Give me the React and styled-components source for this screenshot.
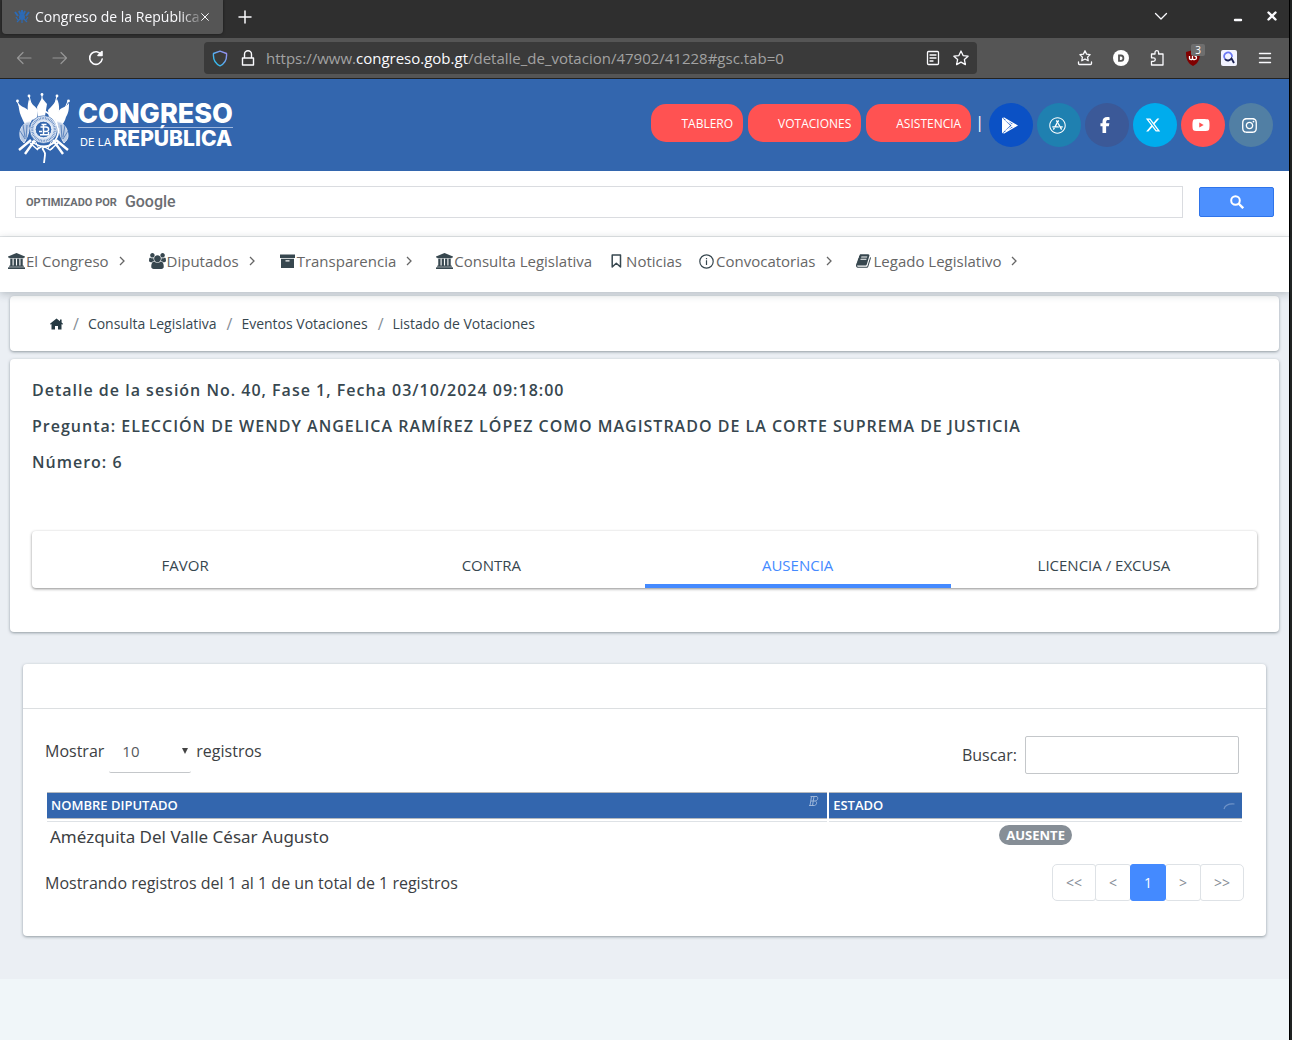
import React from "react";
import styled, { createGlobalStyle, css } from "styled-components";
import { FaAppStore, FaFacebookF, FaXTwitter, FaYoutube, FaInstagram } from "react-icons/fa6";

const sans = `"Open Sans", "Noto Sans", sans-serif`;
const bodySans = `"Noto Sans", "Open Sans", sans-serif`;

const GlobalStyle = createGlobalStyle`
  *, *::before, *::after { box-sizing: border-box; }
  html { height: 100%; }
  body {
    margin: 0;
    min-height: 100%;
    background: #f0f6f9;
    font-family: ${sans};
    font-size: 16px;
    color: #37474f;
  }
  button, input, select { font-family: inherit; margin: 0; }
  a { color: inherit; text-decoration: none; }
`;

const Frame = styled.div`
  min-height: 100vh;
  border-right: 2px solid #202322;
`;
const FrameInner = styled.div`
  min-height: 100vh;
  border-right: 1px solid #000;
`;

/* ---------- Browser window ---------- */
const TabStrip = styled.div`
  display: flex;
  align-items: flex-start;
  height: 38px;
  padding-left: 2px;
  background: #2f2f2f;
  color: #fbfbfe;
`;
const BrowserTab = styled.div`
  display: flex;
  align-items: center;
  width: 221px;
  height: 34px;
  padding: 0 12px;
  background: #555;
  border-radius: 0 0 4px 4px;
  box-shadow: 0 0 3px rgba(0, 0, 0, 0.5);
`;
const TabTitle = styled.span`
  flex: 1;
  min-width: 0;
  margin-left: 5px;
  overflow: hidden;
  white-space: nowrap;
  font-size: 14px;
  line-height: 20px;
  mask-image: linear-gradient(to right, #000 88%, transparent 104%);
`;
const ChromeButton = styled.button`
  display: flex;
  align-items: center;
  justify-content: center;
  flex: none;
  width: ${(p) => p.$w || 36}px;
  height: ${(p) => p.$h || 32}px;
  padding: 0;
  border: 0;
  background: none;
  color: ${(p) => p.$color || "#fbfbfe"};
`;
const Spacer = styled.div`
  flex: 1;
`;
const Toolbar = styled.div`
  display: flex;
  align-items: center;
  height: 41px;
  background: #555;
  border-bottom: 1px solid #222;
`;
const ToolGroup = styled.div`
  display: flex;
  width: ${(p) => p.$w}px;
  padding: 0 ${(p) => (p.$end ? 6 : 0)}px 0 ${(p) => (p.$end ? 0 : 6)}px;
  justify-content: ${(p) => (p.$end ? "flex-end" : "flex-start")};
`;
const AddressBar = styled.div`
  display: flex;
  align-items: center;
  flex: 1;
  height: 32px;
  padding: 0 2px;
  border-radius: 4px;
  background: #3a3a3a;
`;
const Address = styled.div`
  flex: 1;
  margin-left: 4px;
  font-size: 15px;
  line-height: 20px;
  color: #a2a2a2;
  white-space: nowrap;
  b { font-weight: 400; color: #fbfbfe; }
`;
const Blocker = styled.span`
  position: relative;
  display: flex;
`;
const BlockerCount = styled.span`
  position: absolute;
  top: -6px;
  left: 5px;
  width: 14px;
  border-radius: 2px;
  background: #6e6e6e;
  color: #fff;
  font-size: 10px;
  line-height: 12px;
  text-align: center;
`;

/* ---------- Site header ---------- */
const SiteHeader = styled.header`
  display: flex;
  align-items: flex-start;
  height: 92px;
  padding: 14px 16px 0;
  background: #3366ae;
  color: #fff;
`;
const Brand = styled.a`
  display: flex;
  gap: 6px;
  color: #fff;
  font-family: Inter, "Open Sans", sans-serif;
`;
const BrandText = styled.span`
  display: flex;
  flex-direction: column;
  padding-top: 8px;
`;
const BrandTop = styled.span`
  font-size: 27px;
  line-height: 26px;
  font-weight: 800;
  border-bottom: 1px solid #9db6dc;
`;
const BrandBottom = styled.span`
  display: flex;
  align-items: baseline;
  gap: 2px;
  padding-left: 2px;
  font-size: 11px;
  line-height: 22px;
  b { font-size: 21px; font-weight: 800; }
`;
const HeaderLinks = styled.div`
  display: flex;
  gap: 5px;
  padding-top: 11px;
`;
const PillButton = styled.a`
  height: 38px;
  padding: 1px 10px 0 30px;
  border-radius: 15px;
  background: #ff5252;
  color: #fff;
  font-size: 12px;
  line-height: 38px;
`;
const Divider = styled.span`
  margin-left: -1px;
  padding-right: 5px;
  font-size: 16px;
  line-height: 36px;
`;
const SocialLinks = styled.div`
  display: flex;
  gap: 4px;
  padding-top: 10px;
`;
const Social = styled.a`
  display: flex;
  align-items: center;
  justify-content: center;
  width: 44px;
  height: 44px;
  padding-right: 4px;
  border-radius: 50%;
  background: ${(p) => p.$bg};
  color: #fff;
`;

/* ---------- Search ---------- */
const SearchRow = styled.form`
  display: flex;
  align-items: center;
  gap: 16px;
  padding: 15px 15px 18px;
  background: #fff;
  border-bottom: 1px solid #e4e7e9;
`;
const SearchField = styled.label`
  display: flex;
  align-items: center;
  flex: 1;
  height: 32px;
  padding-left: 10px;
  border: 1px solid #dadce0;
  color: #6b6e72;
  font-family: Roboto, sans-serif;
  font-size: 11px;
  font-weight: 700;
`;
const GoogleWord = styled.span`
  margin-left: 8px;
  font-size: 16px;
  line-height: 20px;
  font-weight: 500;
`;
const SearchInput = styled.input`
  flex: 1;
  height: 28px;
  border: 0;
  outline: 0;
  background: transparent;
`;
const SearchButton = styled.button`
  display: flex;
  align-items: center;
  justify-content: center;
  width: 75px;
  height: 30px;
  padding: 0;
  border: 1px solid #2f74ea;
  border-radius: 2px;
  background: #4d90fe;
  color: #fff;
`;

/* ---------- Main menu ---------- */
const MenuBar = styled.nav`
  position: relative;
  display: flex;
  padding: 12px 0 19px;
  background: #fff;
  box-shadow: 0 2px 8px rgba(55, 71, 79, 0.3);
`;
const MenuLink = styled.a`
  display: flex;
  align-items: center;
  padding: 0 8px;
  color: #666;
  font-size: 15px;
  line-height: 24px;
  white-space: nowrap;
`;
const MenuIcon = styled.span`
  display: flex;
  align-items: center;
  justify-content: center;
  width: 17px;
  margin-right: 1px;
  color: #37474f;
`;
const MenuArrow = styled.svg`
  width: 8px;
  height: 10px;
  margin: 0 7px 0 9px;
`;

/* ---------- Content ---------- */
const Main = styled.main`
  padding: 4px 10px 43px;
  background: #ebeff4;
`;
const cardBox = css`
  background: #fff;
  border-radius: 4px;
  box-shadow: 0 1px 3px rgba(55, 71, 79, 0.5);
`;
const Crumbs = styled.nav`
  ${cardBox}
  display: flex;
  align-items: center;
  height: 55px;
  padding: 0 40px;
  margin-bottom: 8px;
  font-size: 14px;
  line-height: 20px;
`;
const Crumb = styled.a`
  display: flex;
  align-items: center;
  & + &::before {
    content: "/";
    padding: 0 9px 0 10px;
    color: #868e96;
    font-size: 16px;
  }
`;
const SessionCard = styled.section`
  ${cardBox}
  padding: 21px 22px 44px;
  margin-bottom: 32px;
`;
const SessionLine = styled.h1`
  margin: 0 0 16px;
  color: #37474f;
  font-size: 16px;
  line-height: 20px;
  font-weight: 600;
  letter-spacing: 1px;
`;
const TabList = styled.div`
  display: grid;
  grid-template-columns: repeat(4, 1fr);
  margin-top: 59px;
  border-radius: 4px;
  background: #fff;
  box-shadow: 0 1px 3px rgba(0, 0, 0, 0.45);
`;
const TabButton = styled.button`
  height: 57px;
  padding: 14px 0 0;
  border: 0;
  border-bottom: 4px solid ${(p) => (p.$active ? "#448aff" : "transparent")};
  background: none;
  color: ${(p) => (p.$active ? "#448aff" : "#37474f")};
  font-size: 15px;
  line-height: 20px;
`;
const TableCard = styled.section`
  ${cardBox}
  margin: 0 13px;
`;
const TableCardHead = styled.div`
  height: 45px;
  border-bottom: 1px solid #dcdfe1;
`;
const TableCardBody = styled.div`
  padding: 23px 22px 35px;
  color: #3c4043;
`;
const Controls = styled.div`
  display: flex;
  justify-content: space-between;
  height: 42px;
  margin-bottom: 16px;
`;
const LengthLabel = styled.label`
  display: flex;
  gap: 5px;
  line-height: 38px;
`;
const SelectWrap = styled.span`
  position: relative;
  &::after {
    content: "";
    position: absolute;
    right: 3px;
    top: 16px;
    border: 3px solid transparent;
    border-top: 6px solid #444;
    border-bottom: 0;
  }
`;
const LengthSelect = styled.select`
  appearance: none;
  width: 82px;
  height: 40px;
  padding: 0 13px 2px;
  border: 0;
  border-bottom: 1px solid #c4c7ca;
  border-radius: 2px;
  background: transparent;
  color: #55595c;
  font-size: 15px;
`;
const FilterLabel = styled.label`
  display: flex;
  align-items: center;
  align-self: flex-end;
  gap: 8px;
  padding-right: 5px;
`;
const FilterInput = styled.input`
  width: 214px;
  height: 38px;
  padding: 0 8px;
  border: 1px solid #c4c7ca;
  border-radius: 2px;
  font-size: 15px;
`;
const DataTable = styled.table`
  width: 100%;
  border-collapse: separate;
  border-spacing: 2px;
`;
const HeadCell = styled.th`
  position: relative;
  width: ${(p) => p.$w};
  height: 27px;
  padding: 0 4px 1px;
  border-top: 1px solid #b5b9be;
  border-bottom: 1px solid #b5b9be;
  background: #3366ae;
  color: #fff;
  font-size: 13px;
  line-height: 24px;
  font-weight: 600;
  text-align: left;
`;
const SortMark = styled.svg`
  position: absolute;
  right: 7px;
  top: 2px;
  width: 12px;
  height: 16px;
`;
const Cell = styled.td`
  padding: ${(p) => (p.$center ? "2px 4px" : "3px")};
  border-top: 1px solid #dee2e6;
  font-family: ${(p) => (p.$center ? sans : bodySans)};
  font-size: 17px;
  line-height: 24px;
  vertical-align: top;
  text-align: ${(p) => (p.$center ? "center" : "left")};
`;
const Badge = styled.span`
  display: block;
  width: fit-content;
  margin: 1px auto 0;
  padding: 0 7px;
  border-radius: 10px;
  background: #868e96;
  color: #fff;
  font-size: 13px;
  line-height: 20px;
  font-weight: 700;
`;
const TableFoot = styled.div`
  display: flex;
  justify-content: space-between;
  align-items: center;
  margin-top: 10px;
`;
const Pager = styled.div`
  display: flex;
`;
const PageButton = styled.button`
  min-width: 36px;
  height: 37px;
  padding: 0 13px;
  border: 1px solid ${(p) => (p.$active ? "#448aff" : "#dee2e6")};
  border-radius: 3px;
  background: ${(p) => (p.$active ? "#448aff" : "#fff")};
  color: ${(p) => (p.$active ? "#fff" : "#868e96")};
  font-size: 14px;
  & + & { margin-left: -1px; }
  ${(p) => p.$active && "position: relative;"}
  &:first-child { border-radius: 5px 3px 3px 5px; }
  &:last-child { border-radius: 3px 5px 5px 3px; }
`;

/* ---------- Drawings ---------- */
const Line = ({ d, size = 16, w = 1.3, fill = "none", stroke = "currentColor" }) => (
  <svg width={size} height={size} viewBox="0 0 16 16" fill={fill} stroke={stroke} strokeWidth={w} strokeLinecap="round" strokeLinejoin="round" aria-hidden="true">
    <path d={d} />
  </svg>
);

const Emblem = () => (
  <svg width="56" height="71" viewBox="0 0 56 71" fill="none" stroke="#fff" aria-hidden="true">
    <g strokeWidth="1">
      <path d="M1 8 23 56M13 3l10 36M26 1v24M41 3 31 39M52 8 32 56" />
    </g>
    <g fill="#fff" stroke="none">
      <circle cx="1.500" cy="8" r="1.400" /><circle cx="13" cy="3" r="1.400" /><circle cx="26" cy="1.500" r="1.400" /><circle cx="41" cy="3" r="1.400" /><circle cx="52.500" cy="8" r="1.400" />
      <path d="M2 10c3 4 7 4 10 7 2 3 2 6 4 10l-4 7c-4-3-5-7-7-11C3 19 3 14 2 10z" />
      <path d="M13 6c2 5 6 7 9 11l-1 9-6 1c-4-7-4-14-2-21z" />
      <path d="M26 5l5 6-2 12-7 1-1-10z" />
      <path d="M41 6c-3 5-6 8-9 11l1 9 7 1c4-7 4-15 1-21z" />
      <path d="M53 10c-3 5-9 4-11 9l-3 9 4 6c4-2 6-6 7-10 3-5 3-9 3-14z" />
    </g>
    <path d="M14 29C8 29 3 35 4 43c0 3 2 5 4 7 3-5 5-10 5-15M41 29c6 0 11 6 11 14 0 3-2 5-4 7-3-5-5-10-5-15" fill="#b9cae4" stroke="#dce5f3" strokeWidth="1" />
    <path d="M7 32l2 12M4 38l5 8M11 32l-1 14M49 32l-2 12M52 38l-5 8M45 32l1 14" stroke="#3366ae" strokeWidth=".7" />
    <path d="M3 57l12-10M9 61l10-14M52 57 40 47M47 61 37 47" strokeWidth="2.400" />
    <path d="M14 50l8 7M42 50l-8 7" strokeWidth="1.500" />
    <circle cx="27.500" cy="36.500" r="13.800" fill="#dce5f3" stroke="#3366ae" strokeWidth=".6" />
    <circle cx="27.500" cy="36.500" r="11.300" stroke="#5d86c1" strokeWidth="2.200" strokeDasharray=".8 .8" />
    <circle cx="27.500" cy="36.500" r="8.300" fill="#3366ae" stroke="#fff" strokeWidth=".8" />
    <path d="M27 34h3c3.500 0 3.500 4.500 0 4.500h-3M24.500 34h3M25.500 31.500h5M27.500 31.500v10M23 38.500h3M24 41.700h8.500V39" strokeWidth="1.500" />
    <path d="M28 12c-3 0-4 4-1 5 8 4 13 10 15 18 2 10-7 19-14 19-4 2 2 4 1 8l-1 8" strokeWidth="1.800" />
    <path d="M16 48c6 7 17 7 24 0M21 56l6-3 7 4M34 57l3-2" strokeWidth="1.400" />
  </svg>
);

const Favicon = () => (
  <svg width="16" height="14" viewBox="0 0 16 14" fill="none" stroke="#2c6ab5" aria-hidden="true">
    <path d="M1 2l3 4M5 1l2 4M8 0v4M11 1 9 5M15 2l-3 4" strokeWidth="2" />
    <circle cx="8" cy="7" r="3" fill="#2c6ab5" stroke="none" />
    <path d="M2 7l2 3M14 7l-2 3M3 12l3-3M13 12l-3-3M8 9v4" strokeWidth="1.200" />
  </svg>
);

const UniversityIcon = () => (
  <svg width="17" height="16" viewBox="0 0 1920 1792" fill="currentColor" aria-hidden="true">
    <path d="M960 0l960 384v128h-128q0 26-20.500 45t-48.500 19h-1526q-28 0-48.500-19t-20.500-45h-128v-128zm-704 640h256v768h128v-768h256v768h128v-768h256v768h128v-768h256v768h59q28 0 48.500 19t20.500 45v64h-1664v-64q0-26 20.500-45t48.500-19h59v-768zm1595 960q28 0 48.500 19t20.500 45v128h-1920v-128q0-26 20.500-45t48.500-19h1782z" />
  </svg>
);
const UsersIcon = () => (
  <svg width="17" height="16" viewBox="0 0 1920 1792" fill="currentColor" aria-hidden="true">
    <path d="M593 896q-162 5-265 128h-134q-82 0-138-40.500t-56-118.500q0-353 124-353 6 0 43.500 21t97.500 42.500 119 21.500q67 0 133-23-5 37-5 66 0 139 81 256zm1071 637q0 120-73 189.500t-194 69.500h-874q-121 0-194-69.500t-73-189.500q0-53 3.500-103.500t14-109 26.500-108.500 43-97.500 62-81 85.500-53.500 111.500-20q10 0 43 21.500t73 48 107 48 135 21.500 135-21.500 107-48 73-48 43-21.500q61 0 111.500 20t85.500 53.500 62 81 43 97.500 26.500 108.500 14 109 3.500 103.500zm-1024-1277q0 106-75 181t-181 75-181-75-75-181 75-181 181-75 181 75 75 181zm704 384q0 159-112.500 271.500t-271.500 112.500-271.500-112.500-112.500-271.500 112.500-271.500 271.500-112.500 271.500 112.500 112.500 271.500zm576 225q0 78-56 118.500t-138 40.500h-134q-103-123-265-128 81-117 81-256 0-29-5-66 66 23 133 23 59 0 119-21.500t97.500-42.500 43.500-21q124 0 124 353zm-128-609q0 106-75 181t-181 75-181-75-75-181 75-181 181-75 181 75 75 181z" />
  </svg>
);
const ArchiveIcon = () => (
  <svg width="15" height="14" viewBox="0 0 15 14" fill="currentColor" fillRule="evenodd" aria-hidden="true">
    <path d="M0 .5h15V4H0zM1 4.800h13V14H1zM5.500 6.300v1.200h4V6.300z" />
  </svg>
);
const BookmarkIcon = () => (
  <svg width="11" height="14" viewBox="0 0 11 14" fill="none" stroke="currentColor" strokeWidth="1.500" strokeLinejoin="round" aria-hidden="true">
    <path d="M1.200 1h8.300v12L5.300 9.300 1.200 13z" />
  </svg>
);
const InfoIcon = () => (
  <svg width="15" height="15" viewBox="0 0 15 15" fill="none" stroke="currentColor" strokeWidth="1.200" aria-hidden="true">
    <circle cx="7.500" cy="7.500" r="6.700" />
    <path d="M7.500 6.300V11M7.500 4v1.300" />
  </svg>
);
const BookIcon = () => (
  <svg width="16" height="16" viewBox="0 0 1792 1792" fill="currentColor" aria-hidden="true">
    <path d="M1639 478q40 57 18 129l-275 906q-19 64-76.500 107.500t-122.500 43.500h-923q-77 0-148.500-53.500t-99.500-131.500q-24-67-2-127 0-4 3-27t4-37q1-8-3-21.500t-3-19.500q2-11 8-21t16.500-23.500 16.500-23.500q23-38 45-91.500t30-91.500q3-10 .5-30t-.5-28q3-11 17-28t17-23q21-36 42-92t25-90q1-9-2.500-32t.5-28q4-13 22-30.500t22-22.500q19-26 42.500-84.500t27.500-96.500q1-8-3-25.500t-2-26.500q2-8 9-18t18-23 17-21q8-12 16.500-30.500t15-35 16-36 19.500-32 26.500-23.500 36-11.500 47.500 5.500l-1 3q38-9 51-9h761q74 0 114 56t18 130l-274 906q-36 119-71.500 153.500t-128.500 34.500h-869q-27 0-38 15-11 16-1 43 24 70 144 70h923q29 0 56-15.500t35-41.500l300-987q7-22 5-57 38 15 59 43zm-1064 2q-4 13 2 22.500t20 9.500h608q13 0 25.500-9.500t16.500-22.500l21-64q4-13-2-22.500t-20-9.500h-608q-13 0-25.500 9.500t-16.500 22.500zm-83 256q-4 13 2 22.500t20 9.500h608q13 0 25.500-9.500t16.500-22.500l21-64q4-13-2-22.500t-20-9.500h-608q-13 0-25.500 9.500t-16.500 22.500z" />
  </svg>
);
const HomeIcon = () => (
  <svg width="13" height="12" viewBox="0 0 13 12" fill="#263a43" role="img" aria-label="Inicio">
    <path d="M6.500.5 10 3.200V1.500h1.600v3L13 5.800l-.8.900-.7-.6V11.500H8V8H5v3.500H1.500V6.100l-.7.600-.8-.9z" />
  </svg>
);
const PlayStoreIcon = () => (
  <svg width="17" height="17" viewBox="0 0 17 17" aria-hidden="true">
    <path d="M1 .5v16L9.300 8.500z" fill="#fff" />
    <path d="M2.500.8 15.800 8.500 2.500 16.200M4.500 2.700l7 5.800-7 5.800M12 6.500v4" fill="none" stroke="#fff" strokeWidth="1.300" />
    <path d="M12.500 6.500l3.500 2-3.500 2-2-2z" fill="#fff" />
  </svg>
);

const menuItems = [
  { label: "El Congreso", Icon: UniversityIcon, arrow: true },
  { label: "Diputados", Icon: UsersIcon, arrow: true },
  { label: "Transparencia", Icon: ArchiveIcon, arrow: true },
  { label: "Consulta Legislativa", Icon: UniversityIcon },
  { label: "Noticias", Icon: BookmarkIcon },
  { label: "Convocatorias", Icon: InfoIcon, arrow: true },
  { label: "Legado Legislativo", Icon: BookIcon, arrow: true },
];

const socials = [
  { name: "Google Play", bg: "#0b51c5", icon: <PlayStoreIcon /> },
  { name: "App Store", bg: "#1f80b0", icon: <FaAppStore size={17} /> },
  { name: "Facebook", bg: "#3b5998", icon: <FaFacebookF size={16} /> },
  { name: "X", bg: "#00aced", icon: <FaXTwitter size={16} /> },
  { name: "YouTube", bg: "#ff5252", icon: <FaYoutube size={18} /> },
  { name: "Instagram", bg: "#517fa4", icon: <FaInstagram size={17} /> },
];

function Browser() {
  return (
    <>
      <TabStrip>
        <BrowserTab>
          <Favicon />
          <TabTitle>Congreso de la República</TabTitle>
          <ChromeButton $w={12} aria-label="Cerrar pestaña"><Line size={14} d="M3.500 3.500l9 9M12.500 3.500l-9 9" /></ChromeButton>
        </BrowserTab>
        <ChromeButton $w={43} $h={34} aria-label="Nueva pestaña"><Line w={1.5} d="M8 2v12M2 8h12" /></ChromeButton>
        <Spacer />
        <ChromeButton $w={120} aria-label="Listar pestañas"><Line d="M2.500 5.500 8 11l5.500-5.500" /></ChromeButton>
        <ChromeButton $w={34} $h={34} aria-label="Minimizar"><Line w={2.4} d="M5 11h6" /></ChromeButton>
        <ChromeButton $w={34} aria-label="Cerrar"><Line w={2.4} d="M4.500 4.500l7 7M11.500 4.500l-7 7" /></ChromeButton>
      </TabStrip>
      <Toolbar>
        <ToolGroup $w={204}>
          <ChromeButton $color="#969696" aria-label="Atrás"><Line w={1.2} d="M15 8H1.500M7 2.500 1.500 8 7 13.500" /></ChromeButton>
          <ChromeButton $color="#969696" aria-label="Adelante"><Line w={1.2} d="M1 8h13.500M9 2.500 14.500 8 9 13.500" /></ChromeButton>
          <ChromeButton aria-label="Recargar"><Line w={1.6} d="M13.500 5A6.300 6.300 0 1 0 14.200 9M14 1.500V5.500h-4z" /></ChromeButton>
        </ToolGroup>
        <AddressBar>
          <ChromeButton $w={28} aria-label="Protección">
            <svg width="16" height="17" viewBox="0 0 16 17" fill="none" aria-hidden="true">
              <defs><linearGradient id="shield" x1="0" y1="1" x2="1" y2="0"><stop offset="0" stopColor="#1cc8f0" /><stop offset="1" stopColor="#a08bf0" /></linearGradient></defs>
              <path d="M8 1.200 14.500 3.500C15 9 13 13.500 8 15.800 3 13.500 1 9 1.500 3.500z" stroke="url(#shield)" strokeWidth="1.400" strokeLinejoin="round" />
            </svg>
          </ChromeButton>
          <ChromeButton $w={28} aria-label="Conexión segura"><Line w={1.4} d="M2.500 8h11v7h-11zM4.500 8V4.300a3.500 3.500 0 0 1 7 0V8" /></ChromeButton>
          <Address>https://www.<b>congreso.gob.gt</b>/detalle_de_votacion/47902/41228#gsc.tab=0</Address>
          <ChromeButton $w={28} aria-label="Modo lectura"><Line w={1.3} d="M3.500 1.500h9a1 1 0 0 1 1 1v11a1 1 0 0 1-1 1h-9a1 1 0 0 1-1-1v-11a1 1 0 0 1 1-1zM5 5h6M5 8h6M5 11h3" /></ChromeButton>
          <ChromeButton $w={28} aria-label="Marcador"><Line w={1.3} d="M8 1l2.100 4.600 5 .6-3.700 3.400 1 5L8 12.100l-4.400 2.500 1-5L.9 6.200l5-.6z" /></ChromeButton>
        </AddressBar>
        <ToolGroup $w={312} $end>
          <ChromeButton aria-label="Marcadores"><Line w={1.3} d="M8 .8l1.600 3.300 3.500.5-2.500 2.500.6 3.600L8 9l-3.200 1.700.6-3.600L2.900 4.600l3.500-.5zM1.500 12v1.500a1 1 0 0 0 1 1h11a1 1 0 0 0 1-1V12" /></ChromeButton>
          <ChromeButton aria-label="Extensión D">
            <svg width="16" height="16" viewBox="0 0 16 16" aria-hidden="true"><circle cx="8" cy="8" r="8" fill="#fff" /><path d="M6 5.500h2c3.200 0 3.200 5.400 0 5.400H6z" fill="none" stroke="#555" strokeWidth="1.800" /></svg>
          </ChromeButton>
          <ChromeButton aria-label="Extensiones"><Line w={1.3} d="M6 4V2.500a1.800 1.800 0 0 1 3.600 0V4H14v11H2.500v-3.600H4.500a1.800 1.800 0 0 0 0-3.600H2.500V4z" /></ChromeButton>
          <ChromeButton aria-label="Bloqueador">
            <Blocker>
              <svg width="14" height="16" viewBox="0 0 14 16" aria-hidden="true"><path d="M7 0l7 2c0 6-1 11-7 14C1 13 0 8 0 2z" fill="#800000" /><path d="M3.500 6v2.500c0 1.500 3 1.500 3 0V6M6.500 8.500c0 1.500 4 1.500 4-.5S8.500 6 8.500 6" fill="none" stroke="#fff" strokeWidth="1.300" /></svg>
              <BlockerCount>3</BlockerCount>
            </Blocker>
          </ChromeButton>
          <ChromeButton aria-label="Buscador">
            <svg width="16" height="16" viewBox="0 0 16 16" fill="none" aria-hidden="true"><rect width="16" height="16" rx="2" fill="#f2f3ff" /><path d="M4 9A4 4 0 1 1 11 7" stroke="#6a78f5" strokeWidth="1.800" /><path d="M4 9c2 2.500 5 1.500 6.500-.5L13 13" stroke="#1d2455" strokeWidth="1.900" /></svg>
          </ChromeButton>
          <ChromeButton aria-label="Menú"><Line w={1.4} d="M2.500 3.500h11M2.500 8h11M2.500 12.500h11" /></ChromeButton>
        </ToolGroup>
      </Toolbar>
    </>
  );
}

export default function App() {
  return (
    <Frame>
      <GlobalStyle />
      <FrameInner>
        <Browser />
        <SiteHeader>
          <Brand href="#inicio">
            <Emblem />
            <BrandText>
              <BrandTop>CONGRESO</BrandTop>
              <BrandBottom>DE LA <b>REPÚBLICA</b></BrandBottom>
            </BrandText>
          </Brand>
          <Spacer />
          <HeaderLinks>
            <PillButton href="#tablero">TABLERO</PillButton>
            <PillButton href="#votaciones">VOTACIONES</PillButton>
            <PillButton href="#asistencia">ASISTENCIA</PillButton>
            <Divider>|</Divider>
          </HeaderLinks>
          <SocialLinks>
            {socials.map((s) => (
              <Social key={s.name} href="#red" aria-label={s.name} $bg={s.bg}>{s.icon}</Social>
            ))}
          </SocialLinks>
        </SiteHeader>
        <SearchRow onSubmit={(e) => e.preventDefault()}>
          <SearchField>
            OPTIMIZADO POR <GoogleWord>Google</GoogleWord>
            <SearchInput type="text" />
          </SearchField>
          <SearchButton type="submit" aria-label="Buscar en el sitio">
            <svg width="14" height="14" viewBox="0 0 14 14" fill="none" stroke="currentColor" strokeWidth="2" aria-hidden="true"><circle cx="5.500" cy="5.500" r="4.300" /><path d="M8.500 8.500l4.700 4.700" strokeWidth="2.400" /></svg>
          </SearchButton>
        </SearchRow>
        <MenuBar>
          {menuItems.map(({ label, Icon, arrow }) => (
            <MenuLink key={label} href="#menu">
              <MenuIcon><Icon /></MenuIcon>
              {label}
              {arrow && (
                <MenuArrow viewBox="0 0 8 10" fill="none" stroke="currentColor" strokeWidth="1.300" aria-hidden="true"><path d="M2 1l4 4-4 4" /></MenuArrow>
              )}
            </MenuLink>
          ))}
        </MenuBar>
        <Main>
          <Crumbs>
            <Crumb href="#inicio"><HomeIcon /></Crumb>
            <Crumb href="#consulta">Consulta Legislativa</Crumb>
            <Crumb href="#eventos">Eventos Votaciones</Crumb>
            <Crumb href="#listado">Listado de Votaciones</Crumb>
          </Crumbs>
          <SessionCard>
            <SessionLine>Detalle de la sesión No. 40, Fase 1, Fecha 03/10/2024 09:18:00</SessionLine>
            <SessionLine as="h2">Pregunta: ELECCIÓN DE WENDY ANGELICA RAMÍREZ LÓPEZ COMO MAGISTRADO DE LA CORTE SUPREMA DE JUSTICIA</SessionLine>
            <SessionLine as="h2">Número: 6</SessionLine>
            <TabList role="tablist">
              {["FAVOR", "CONTRA", "AUSENCIA", "LICENCIA / EXCUSA"].map((t) => (
                <TabButton key={t} role="tab" aria-selected={t === "AUSENCIA"} $active={t === "AUSENCIA"}>{t}</TabButton>
              ))}
            </TabList>
          </SessionCard>
          <TableCard>
            <TableCardHead />
            <TableCardBody>
              <Controls>
                <LengthLabel>
                  Mostrar
                  <SelectWrap>
                    <LengthSelect defaultValue="10">
                      <option>10</option>
                      <option>25</option>
                      <option>50</option>
                    </LengthSelect>
                  </SelectWrap>
                  registros
                </LengthLabel>
                <FilterLabel>Buscar:<FilterInput type="search" /></FilterLabel>
              </Controls>
              <DataTable>
                <thead>
                  <tr>
                    <HeadCell $w="65.4%">
                      NOMBRE DIPUTADO
                      <SortMark viewBox="0 0 12 16" fill="none" stroke="#a5bcdd" strokeWidth=".9" aria-hidden="true"><path d="M3.500 1.500 2 10.500M6 1.500 4.500 10.500M2.500 1.500h6.500c1.500 1.500.5 4-1.500 4.500H3M7.500 6c2 1.500 1 4-1 4.500H1" /></SortMark>
                    </HeadCell>
                    <HeadCell>
                      ESTADO
                      <SortMark viewBox="0 0 12 16" fill="none" stroke="#6f93c8" strokeWidth="1.200" aria-hidden="true"><path d="M1 14C2 10.500 6 8.500 11.500 9" /></SortMark>
                    </HeadCell>
                  </tr>
                </thead>
                <tbody>
                  <tr>
                    <Cell>Amézquita Del Valle César Augusto</Cell>
                    <Cell $center><Badge>AUSENTE</Badge></Cell>
                  </tr>
                </tbody>
              </DataTable>
              <TableFoot>
                <span>Mostrando registros del 1 al 1 de un total de 1 registros</span>
                <Pager>
                  {["<<", "<", "1", ">", ">>"].map((t) => (
                    <PageButton key={t} $active={t === "1"}>{t}</PageButton>
                  ))}
                </Pager>
              </TableFoot>
            </TableCardBody>
          </TableCard>
        </Main>
      </FrameInner>
    </Frame>
  );
}
